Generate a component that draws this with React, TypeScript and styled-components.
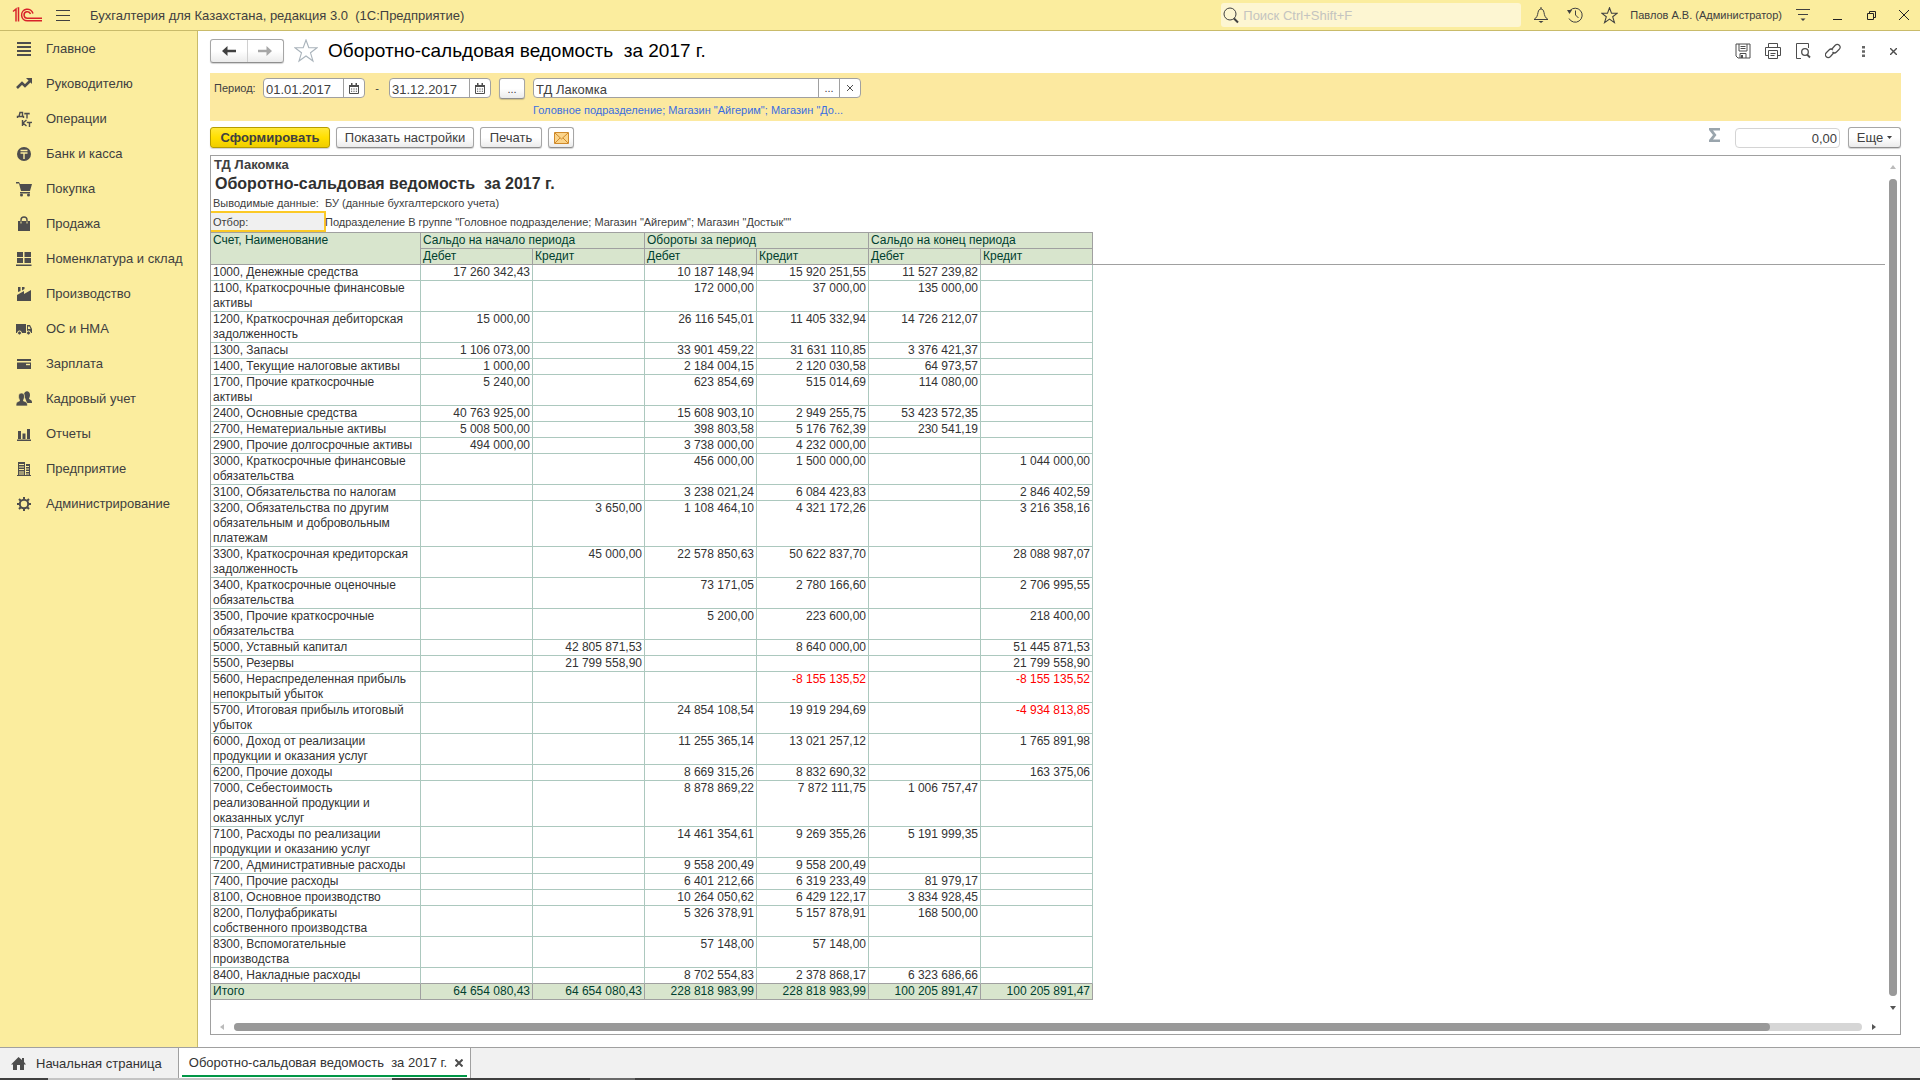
import React from 'react';
import styled, { createGlobalStyle, css } from 'styled-components';

const sans = '"Liberation Sans", Arial, sans-serif';
const ink = '#404040';
const yellow = '#fbed9e';

const GlobalStyle = createGlobalStyle`
  * { box-sizing: border-box; }
  html, body { margin: 0; height: 100%; }
  body { background: #fff; color: ${ink}; font-family: ${sans}; font-size: 13px; }
  #root { height: 100%; }
  button, input { font-family: ${sans}; color: ${ink}; margin: 0; }
`;

const Shell = styled.div`
  display: flex;
  flex-direction: column;
  height: 100vh;
  overflow: hidden;
`;

/* ---------- top bar ---------- */
const TopBar = styled.header`
  display: flex;
  align-items: center;
  flex: none;
  height: 31px;
  padding-left: 12px;
  background: ${yellow};
  border-bottom: 1px solid #c9bb6a;
`;
const AppTitle = styled.div`
  flex: 1;
  font-size: 13px;
  white-space: pre;
`;
const IconButton = styled.button<{ $w?: number; $h?: number }>`
  display: flex;
  align-items: center;
  justify-content: center;
  flex: none;
  width: ${(p) => p.$w ?? 34}px;
  height: ${(p) => p.$h ?? 28}px;
  padding: 0;
  border: 0;
  background: none;
`;
const MenuButton = styled(IconButton)`
  margin: 0 12px 0 6px;
`;
const Search = styled.label`
  display: flex;
  align-items: center;
  gap: 4px;
  width: 300px;
  height: 24px;
  margin-right: 3px;
  padding: 0 2px;
  border-radius: 3px;
  background: #fdf6d2;
`;
const SearchInput = styled.input`
  flex: 1;
  min-width: 0;
  padding: 0;
  border: 0;
  outline: 0;
  background: none;
  font-size: 13px;
  &::placeholder { color: #c4c4c0; opacity: 1; }
`;
const User = styled.a`
  margin: 0 4px 0 4px;
  color: ${ink};
  font-size: 11px;
  text-decoration: none;
`;

/* ---------- body ---------- */
const Body = styled.div`
  display: flex;
  flex: 1;
  min-height: 0;
`;
const Sidebar = styled.nav`
  flex: none;
  width: 198px;
  background: ${yellow};
  border-right: 1px solid #c9bb6a;
`;
const NavItem = styled.a`
  display: flex;
  align-items: center;
  gap: 14px;
  height: 35px;
  padding-left: 16px;
  color: ${ink};
  font-size: 13px;
  text-decoration: none;
  white-space: nowrap;
`;
const Main = styled.main`
  display: flex;
  flex-direction: column;
  flex: 1;
  min-width: 0;
  padding: 8px 19px 12px 12px;
`;

const TitleRow = styled.div`
  display: flex;
  align-items: center;
  flex: none;
  height: 24px;
  margin-right: -7px;
`;
const raised = css`
  border: 1px solid #a6a6a6;
  border-bottom-color: #8e8e8e;
  border-radius: 3px;
  background: linear-gradient(#fff 50%, #ebebeb);
  box-shadow: 0 1px 1px rgba(0, 0, 0, 0.18);
`;
const History = styled.div`
  display: flex;
  width: 74px;
  height: 24px;
  ${raised}
`;
const HistoryButton = styled.button`
  display: flex;
  flex: 1;
  align-items: center;
  justify-content: center;
  padding: 0;
  border: 0;
  background: none;
  & + & { border-left: 1px solid #d0d0d0; }
`;
const PageTitle = styled.h1`
  flex: 1;
  margin: 0;
  color: #000;
  font-size: 19px;
  font-weight: 400;
  white-space: pre;
`;

const Filter = styled.form`
  display: flex;
  align-items: flex-start;
  flex: none;
  height: 48px;
  margin-top: 10px;
  padding: 5px 4px;
  background: #fce9a0;
`;
const FilterLabel = styled.label`
  width: 49px;
  font-size: 11px;
  line-height: 21px;
`;
const Dash = styled.span`
  width: 24px;
  text-align: center;
  font-size: 11px;
  line-height: 21px;
`;
const Field = styled.div<{ $w: number }>`
  display: flex;
  width: ${(p) => p.$w}px;
  height: 20px;
  border: 1px solid #a0a0a0;
  border-radius: 4px;
  background: #fff;
`;
const FieldInput = styled.input`
  flex: 1;
  min-width: 0;
  padding: 2px 2px 0;
  border: 0;
  outline: 0;
  background: none;
  font-size: 13px;
`;
const FieldButton = styled.button`
  display: flex;
  align-items: center;
  justify-content: center;
  width: 21px;
  padding: 0;
  border: 0;
  border-left: 1px solid #a0a0a0;
  background: none;
  font-size: 11px;
`;
const Company = styled.div`
  display: flex;
  flex-direction: column;
  gap: 5px;
  margin-left: 8px;
`;
const FilterLink = styled.a`
  color: #3a6ee0;
  font-size: 11px;
  line-height: 14px;
  text-decoration: none;
`;

const Button = styled.button<{ $w?: number; $primary?: boolean }>`
  display: flex;
  align-items: center;
  justify-content: center;
  gap: 4px;
  width: ${(p) => (p.$w ? `${p.$w}px` : 'auto')};
  height: 21px;
  padding: 0;
  font-size: 13px;
  white-space: nowrap;
  ${raised}
  ${(p) =>
    p.$primary &&
    css`
      border-color: #b59c00;
      background: linear-gradient(#ffe838, #ffdf00 50%, #efcd00);
      font-weight: 700;
    `}
`;
const PeriodButton = styled(Button)`
  margin-left: 8px;
  font-size: 11px;
`;
const Commands = styled.div`
  display: flex;
  align-items: center;
  flex: none;
  gap: 6px;
  height: 21px;
  margin-top: 6px;
`;
const Sum = styled.label`
  display: flex;
  align-items: flex-start;
  gap: 14px;
  margin: 0 2px 0 auto;
`;
const SumInput = styled.input`
  width: 105px;
  height: 20px;
  padding: 2px 2px 0;
  border: 1px solid #d4d4d4;
  border-radius: 4px;
  font-size: 13px;
  text-align: right;
`;

/* ---------- report ---------- */
const Report = styled.section`
  display: grid;
  grid-template: minmax(0, 1fr) 15px / minmax(0, 1fr) 15px;
  flex: 1;
  min-height: 0;
  margin-top: 7px;
  border: 1px solid #a0a0a0;
`;
const Sheet = styled.div`
  overflow: hidden;
`;
const Org = styled.div`
  padding: 0 3px;
  font-size: 13px;
  font-weight: 700;
  line-height: 17px;
`;
const ReportTitle = styled.h2`
  margin: 0;
  padding: 0 4px;
  font-size: 16px;
  line-height: 21px;
  color: #303030;
  white-space: pre;
`;
const Param = styled.div<{ $h: number }>`
  display: flex;
  height: ${(p) => p.$h}px;
  font-size: 11px;
  line-height: ${(p) => p.$h + 2}px;
  white-space: nowrap;
`;
const ParamName = styled.div<{ $selected?: boolean }>`
  width: ${(p) => (p.$selected ? 115 : 114)}px;
  margin-right: ${(p) => (p.$selected ? -1 : 0)}px;
  padding-left: 2px;
  ${(p) =>
    p.$selected &&
    css`
      border: 2px solid #fbc926;
      border-left: 0;
      background: #f0f0f0;
      line-height: 19px;
    `}
`;

const Table = styled.table`
  width: 100%;
  border-collapse: separate;
  border-spacing: 0;
  table-layout: fixed;
  font-size: 12px;
  line-height: 15px;
`;
const Col = styled.col<{ $w?: number }>`
  width: ${(p) => (p.$w ? `${p.$w}px` : 'auto')};
`;
const Th = styled.th<{ $top?: boolean }>`
  padding: 0 2px;
  border: solid #a0a0a0;
  border-width: ${(p) => (p.$top ? '1px 1px 1px 0' : '0 1px 1px 0')};
  background: #d8e5cd;
  color: #003f2f;
  font-weight: 400;
  text-align: left;
  vertical-align: top;
`;
const FreezeLine = styled.td`
  padding: 0;
  border-bottom: 1px solid #a0a0a0;
`;
const Td = styled.td<{ $total?: boolean; $negative?: boolean; $last?: boolean }>`
  height: 16px;
  padding: 0 2px;
  border: solid ${(p) => (p.$total ? '#a0a0a0' : '#acc8be')};
  border-width: 0 1px 1px 0;
  border-bottom-color: ${(p) => (p.$total || p.$last ? '#a0a0a0' : '#acc8be')};
  background: ${(p) => (p.$total ? '#d8e5cd' : 'transparent')};
  color: ${(p) => (p.$negative ? '#f00' : p.$total ? '#003f2f' : '#333')};
  text-align: right;
  vertical-align: top;
  white-space: nowrap;
`;
const NameTd = styled(Td)`
  padding-right: 6px;
  text-align: left;
  white-space: normal;
`;

const ScrollBar = styled.div<{ $vertical?: boolean }>`
  display: flex;
  flex-direction: ${(p) => (p.$vertical ? 'column' : 'row')};
  align-items: center;
  gap: 4px;
  padding: ${(p) => (p.$vertical ? '3px 0' : '0 3px')};
`;
const ScrollArrow = styled.button<{ $vertical?: boolean }>`
  display: flex;
  align-items: center;
  justify-content: center;
  flex: none;
  width: ${(p) => (p.$vertical ? 11 : 16)}px;
  height: ${(p) => (p.$vertical ? 16 : 11)}px;
  padding: 0;
  border: 0;
  background: none;
`;
const Track = styled.div<{ $vertical?: boolean }>`
  flex: 1;
  ${(p) => (p.$vertical ? 'width: 8px;' : 'height: 8px;')}
  border-radius: 4px;
  background: #d6d6d6;
`;
const Thumb = styled.div<{ $vertical?: boolean }>`
  width: ${(p) => (p.$vertical ? '100%' : '94.35%')};
  height: 100%;
  border-radius: 4px;
  background: #999;
`;

/* ---------- open windows ---------- */
const Tabs = styled.footer`
  display: flex;
  flex: none;
  height: 31px;
  border-top: 1px solid #a0a0a0;
  background: #f1f1f1;
`;
const Tab = styled.div<{ $active?: boolean }>`
  display: flex;
  align-items: center;
  gap: 10px;
  padding: 0 16px 0 11px;
  ${(p) =>
    p.$active &&
    css`
      padding: 0;
      border: solid #a0a0a0;
      border-width: 0 1px;
      background: #fff;
    `}
`;
const TabInner = styled.div`
  display: flex;
  align-items: center;
  gap: 8px;
  align-self: stretch;
  margin: 0 3px 1px;
  padding: 2px 4px 0 7px;
  border-bottom: 2px solid #009646;
`;
const TabLink = styled.a`
  color: #333;
  font-size: 13px;
  text-decoration: none;
  white-space: pre;
`;
const Strip = styled.div`
  display: flex;
  flex: none;
  height: 2px;
  background: #404040;
`;
const StripPart = styled.div<{ $w: number; $c: string }>`
  width: ${(p) => p.$w}px;
  background: ${(p) => p.$c};
`;

/* ---------- icons ---------- */
const Svg = ({ w = 16, h = 16, children }: { w?: number; h?: number; children: React.ReactNode }) => (
  <svg width={w} height={h} viewBox={`0 0 ${w} ${h}`} fill="none" stroke="none" aria-hidden="true">
    {children}
  </svg>
);
const g = '#4d4d4d';

const navItems: [string, React.ReactNode][] = [
  ['Главное', <path d="M1 1h14v2H1zM1 5h14v2H1zM1 9h14v2H1zM1 13h14v2H1z" fill={g} />],
  ['Руководителю', <><path d="M1 12l5-5 3 3 5-5" stroke={g} strokeWidth="2.6" /><path d="M10 2h6v6z" fill={g} /></>],
  ['Операции', <>
    <path d="M1.500 7V5.500h6V7M3 5.500l1-4h2.500v4M9 3.500V2.500h4v1M11 2.500V7.500M6.500 9v6M10.500 9L7 12l3.500 3M11.500 12v-.5h4v.5M13.500 11.500V16" stroke={g} strokeWidth="1.400" />
  </>],
  ['Банк и касса', <><circle cx="8" cy="8" r="7" fill={g} /><path d="M4.500 4.500h7M4.500 7h7M8 7v6" stroke={yellow} strokeWidth="1.400" /></>],
  ['Покупка', <><path d="M0 1h3l1 2h12l-2 7H5L3 2.500H0zM4 11h10v1.500H4z" fill={g} /><circle cx="5.500" cy="14" r="1.500" fill={g} /><circle cx="12.500" cy="14" r="1.500" fill={g} /></>],
  ['Продажа', <><path d="M2 5h12v10H2z" fill={g} /><path d="M5 8V4a3 3 0 0 1 6 0v4" stroke={g} strokeWidth="1.400" /><path d="M5 5.500v2M11 5.500v2" stroke={yellow} /></>],
  ['Номенклатура и склад', <path d="M1 1h6v5H1zM8.500 1H15v5H8.500zM1 7h6v5H1zM8.500 7H15v5H8.500zM0 13.500h15.500v1.500H0z" fill={g} />],
  ['Производство', <path d="M2 1h2.500v4L2 6zM6 1h2.500v2L6 4.500zM1 9l7-4v3l7-4v11H1z" fill={g} />],
  ['ОС и НМА', <><path d="M0 3h10v9H0zM11 4h3l2 4v4h-5z" fill={g} /><path d="M12 5.500h1.500L14.500 8H12z" fill={yellow} /><circle cx="3.500" cy="12" r="2" fill={g} stroke={yellow} /><circle cx="12.500" cy="12" r="2" fill={g} stroke={yellow} /></>],
  ['Зарплата', <><path d="M1 3h14v2H1zM1 6.500h14V13H1z" fill={g} /><path d="M10 8.500h4" stroke={yellow} strokeWidth="1.400" /></>],
  ['Кадровый учет', <><path d="M8 4c0-5 6-5 6 0 0 2-1 3-1 4 2 1 3 1 3 4h-5z" fill={g} /><path d="M2.500 5c0-4 6-4 6 0 0 3-1 3-1 5 3 1 4 1 4 5H0c0-4 1-4 3.500-5 0-2-1-2-1-5z" fill={g} stroke={yellow} strokeWidth=".7" /></>],
  ['Отчеты', <path d="M1 13.500h14V15H1zM2 5h3v8H2zM6.500 7.500h3V13h-3zM11 3h3v10h-3z" fill={g} />],
  ['Предприятие', <><path d="M2 1h7v14H2zM10 3h4v12h-4zM1 14h14v1H1z" fill={g} /><path d="M3 3.500h5M3 6h5M3 8.500h5M3 11h5M10 5.500h3M10 8h3M10 10.500h3M10 13h3M3 13h5" stroke={yellow} /></>],
  ['Администрирование', <><circle cx="8" cy="8" r="4.200" stroke={g} strokeWidth="2" /><path d="M8 1v3M8 12v3M1 8h3M12 8h3M3 3l2 2M11 11l2 2M13 3l-2 2M3 13l2-2" stroke={g} strokeWidth="2" /></>],
];

const starPath = 'M12 1l2.800 7.800H23l-6.500 5L19 22l-7-5-7 5 2.500-8.200L1 8.800h8.200z';

const Logo = () => (
  <Svg w={30} h={16}>
    <g stroke="#d8232a" strokeWidth="1.500">
      <path d="M1 4.500L4 2V14.500M6.500 14.500V1H5.500" />
      <path d="M21 6.500A5.800 5.800 0 1 0 15.500 13.800H30" />
      <path d="M18.500 7A3.300 3.300 0 1 0 15.500 11.300H30" />
    </g>
  </Svg>
);
const Calendar = () => (
  <Svg w={10} h={11}>
    <path d="M.5 2.500h9v8h-9z" stroke={g} />
    <path d="M0 2h10v2H0zM2 0h1.500v2H2zM6.500 0H8v2H6.500zM2 5.500h1.200v1H2zM4.400 5.500h1.200v1H4.400zM6.800 5.500H8v1H6.800zM2 7.800h1.200v1H2zM4.400 7.800h1.200v1H4.400zM6.800 7.800H8v1H6.800z" fill={g} />
  </Svg>
);
const Triangle = ({ d, c }: { d: string; c: string }) => (
  <Svg w={6} h={6}><path d={d} fill={c} /></Svg>
);

/* ---------- data ---------- */
const rows: string[][] = [
  ['1000, Денежные средства', '17 260 342,43', '', '10 187 148,94', '15 920 251,55', '11 527 239,82', ''],
  ['1100, Краткосрочные финансовые активы', '', '', '172 000,00', '37 000,00', '135 000,00', ''],
  ['1200, Краткосрочная дебиторская задолженность', '15 000,00', '', '26 116 545,01', '11 405 332,94', '14 726 212,07', ''],
  ['1300, Запасы', '1 106 073,00', '', '33 901 459,22', '31 631 110,85', '3 376 421,37', ''],
  ['1400, Текущие налоговые активы', '1 000,00', '', '2 184 004,15', '2 120 030,58', '64 973,57', ''],
  ['1700, Прочие краткосрочные активы', '5 240,00', '', '623 854,69', '515 014,69', '114 080,00', ''],
  ['2400, Основные средства', '40 763 925,00', '', '15 608 903,10', '2 949 255,75', '53 423 572,35', ''],
  ['2700, Нематериальные активы', '5 008 500,00', '', '398 803,58', '5 176 762,39', '230 541,19', ''],
  ['2900, Прочие долгосрочные активы', '494 000,00', '', '3 738 000,00', '4 232 000,00', '', ''],
  ['3000, Краткосрочные финансовые обязательства', '', '', '456 000,00', '1 500 000,00', '', '1 044 000,00'],
  ['3100, Обязательства по налогам', '', '', '3 238 021,24', '6 084 423,83', '', '2 846 402,59'],
  ['3200, Обязательства по другим обязательным и добровольным платежам', '', '3 650,00', '1 108 464,10', '4 321 172,26', '', '3 216 358,16'],
  ['3300, Краткосрочная кредиторская задолженность', '', '45 000,00', '22 578 850,63', '50 622 837,70', '', '28 088 987,07'],
  ['3400, Краткосрочные оценочные обязательства', '', '', '73 171,05', '2 780 166,60', '', '2 706 995,55'],
  ['3500, Прочие краткосрочные обязательства', '', '', '5 200,00', '223 600,00', '', '218 400,00'],
  ['5000, Уставный капитал', '', '42 805 871,53', '', '8 640 000,00', '', '51 445 871,53'],
  ['5500, Резервы', '', '21 799 558,90', '', '', '', '21 799 558,90'],
  ['5600, Нераспределенная прибыль непокрытый убыток', '', '', '', '-8 155 135,52', '', '-8 155 135,52'],
  ['5700, Итоговая прибыль итоговый убыток', '', '', '24 854 108,54', '19 919 294,69', '', '-4 934 813,85'],
  ['6000, Доход от реализации продукции и оказания услуг', '', '', '11 255 365,14', '13 021 257,12', '', '1 765 891,98'],
  ['6200, Прочие доходы', '', '', '8 669 315,26', '8 832 690,32', '', '163 375,06'],
  ['7000, Себестоимость реализованной продукции и оказанных услуг', '', '', '8 878 869,22', '7 872 111,75', '1 006 757,47', ''],
  ['7100, Расходы по реализации продукции и оказанию услуг', '', '', '14 461 354,61', '9 269 355,26', '5 191 999,35', ''],
  ['7200, Административные расходы', '', '', '9 558 200,49', '9 558 200,49', '', ''],
  ['7400, Прочие расходы', '', '', '6 401 212,66', '6 319 233,49', '81 979,17', ''],
  ['8100, Основное производство', '', '', '10 264 050,62', '6 429 122,17', '3 834 928,45', ''],
  ['8200, Полуфабрикаты собственного производства', '', '', '5 326 378,91', '5 157 878,91', '168 500,00', ''],
  ['8300, Вспомогательные производства', '', '', '57 148,00', '57 148,00', '', ''],
  ['8400, Накладные расходы', '', '', '8 702 554,83', '2 378 868,17', '6 323 686,66', ''],
  ['Итого', '64 654 080,43', '64 654 080,43', '228 818 983,99', '228 818 983,99', '100 205 891,47', '100 205 891,47'],
];
const groups = ['Сальдо на начало периода', 'Обороты за период', 'Сальдо на конец периода'];

const ReportTable = () => (
  <Table>
    <colgroup>
      <Col $w={210} />
      {[0, 1, 2, 3, 4, 5].map((i) => <Col key={i} $w={112} />)}
      <Col />
    </colgroup>
    <thead>
      <tr>
        <Th $top rowSpan={2}>Счет, Наименование</Th>
        {groups.map((t) => <Th $top colSpan={2} key={t}>{t}</Th>)}
        <FreezeLine rowSpan={2} />
      </tr>
      <tr>
        {groups.map((t) => (
          <React.Fragment key={t}>
            <Th>Дебет</Th>
            <Th>Кредит</Th>
          </React.Fragment>
        ))}
      </tr>
    </thead>
    <tbody>
      {rows.map(([name, ...values], r) => {
        const total = r === rows.length - 1;
        const last = r === rows.length - 2;
        return (
          <tr key={name}>
            <NameTd $total={total} $last={last}>{name}</NameTd>
            {values.map((v, i) => (
              <Td key={i} $total={total} $last={last} $negative={v.startsWith('-')}>{v}</Td>
            ))}
          </tr>
        );
      })}
    </tbody>
  </Table>
);

export default function App() {
  return (
    <Shell>
      <GlobalStyle />
      <TopBar>
        <Logo />
        <MenuButton $w={30} aria-label="Меню">
          <Svg w={14} h={11}><path d="M0 .5h14M0 5.500h14M0 10.500h14" stroke={ink} /></Svg>
        </MenuButton>
        <AppTitle>Бухгалтерия для Казахстана, редакция 3.0  (1С:Предприятие)</AppTitle>
        <Search>
          <Svg w={16} h={18}>
            <circle cx="7" cy="8" r="6" stroke={ink} /><path d="M11 12.500l4 4" stroke={ink} strokeWidth="2" />
          </Svg>
          <SearchInput aria-label="Поиск" placeholder="Поиск Ctrl+Shift+F" />
        </Search>
        <IconButton aria-label="Уведомления">
          <Svg w={16} h={18}>
            <path d="M1 13.500h14c-3-2-3.500-4-4-7C10.500 4 9.500 3 8 3S5.500 4 5 6.500c-.5 3-1 5-4 7z" stroke={ink} /><path d="M7.500 1h1v2h-1zM5.500 15h5l-2.500 2z" fill={ink} />
          </Svg>
        </IconButton>
        <IconButton aria-label="История">
          <Svg w={18} h={18}>
            <path d="M4 4.500A7 7 0 1 1 3 12.500M9.500 4.500V9l3 3" stroke={ink} /><path d="M1 4h5L3.500 8z" fill={ink} />
          </Svg>
        </IconButton>
        <IconButton aria-label="Избранное">
          <svg width="17" height="17" viewBox="0 0 24 24" fill="none" aria-hidden="true"><path d={starPath} stroke={ink} strokeWidth="1.500" /></svg>
        </IconButton>
        <User href="#user">Павлов А.В. (Администратор)</User>
        <IconButton aria-label="Настройки окна">
          <Svg w={14} h={14}><path d="M0 1.500h14M2 6.500h10" stroke={ink} /><path d="M4.500 10.500h5L7 13z" fill={ink} /></Svg>
        </IconButton>
        <IconButton aria-label="Свернуть"><Svg w={9} h={10}><path d="M0 9.500h9" stroke="#222" /></Svg></IconButton>
        <IconButton aria-label="Развернуть">
          <Svg w={9} h={9}><path d="M.5 2.500h6v6h-6zM2.500 2V.5h6v6H7" stroke="#222" /></Svg>
        </IconButton>
        <IconButton $w={32} aria-label="Закрыть"><Svg w={10} h={10}><path d="M0 0l10 10M10 0L0 10" stroke="#222" /></Svg></IconButton>
      </TopBar>

      <Body>
        <Sidebar>
          {navItems.map(([label, icon]) => (
            <NavItem href="#section" key={label}><Svg>{icon}</Svg>{label}</NavItem>
          ))}
        </Sidebar>
        <Main>
          <TitleRow>
            <History>
              <HistoryButton aria-label="Назад">
                <Svg w={14} h={10}><path d="M0 5l5.500-5v3.800H14v2.400H5.500V10z" fill="#404040" /></Svg>
              </HistoryButton>
              <HistoryButton aria-label="Вперед">
                <Svg w={14} h={10}><path d="M14 5L8.500 0v3.800H0v2.400h8.500V10z" fill="#a6a6a6" /></Svg>
              </HistoryButton>
            </History>
            <IconButton $w={44} aria-label="В избранное">
              <Svg w={24} h={24}><path d={starPath} stroke="#a9b3bb" strokeWidth="1.100" /></Svg>
            </IconButton>
            <PageTitle>Оборотно-сальдовая ведомость  за 2017 г.</PageTitle>
            <IconButton $w={30} aria-label="Сохранить">
              <Svg><path d="M1 1h14v14H3l-2-2zM4 1v7h8V1M5 15v-4.500h6V15M5.500 3.500h5M5.500 5.500h5" stroke={g} /><path d="M6 12h2v3H6z" fill={g} /></Svg>
            </IconButton>
            <IconButton $w={30} aria-label="Печать">
              <Svg><path d="M3.500 4.500v-4h9v4M3.500 12.500h-3v-8h15v8h-3M3.500 7.500h9v8h-9zM5.500 10.500h5M5.500 12.500h4" stroke={g} /></Svg>
            </IconButton>
            <IconButton $w={30} aria-label="Просмотр">
              <Svg><path d="M6 15.500H1.500V.5h12V5" stroke={g} /><circle cx="10" cy="9" r="3.300" stroke={g} strokeWidth="1.300" /><path d="M12 11.500l3 3" stroke={g} strokeWidth="1.800" /></Svg>
            </IconButton>
            <IconButton $w={30} aria-label="Ссылка">
              <Svg><path d="M6.500 6.500l3.500-4c3-3 7 1 4 4L11.500 9c-1.500 1.500-3 1-4 0M9 9.500L5.500 13.500c-3 3-7-1-4-4L4 7c1.500-1.500 3-1 4 0" stroke={g} strokeWidth="1.200" /></Svg>
            </IconButton>
            <IconButton $w={30} aria-label="Ещё">
              <Svg w={3} h={11}><path d="M0 0h3v2.500H0zM0 4.200h3v2.500H0zM0 8.400h3v2.500H0z" fill="#666" /></Svg>
            </IconButton>
            <IconButton $w={30} aria-label="Закрыть страницу">
              <Svg w={7} h={7}><path d="M0 0l7 7M7 0L0 7" stroke={g} strokeWidth="1.400" /></Svg>
            </IconButton>
          </TitleRow>

          <Filter>
            <FilterLabel htmlFor="from">Период:</FilterLabel>
            <Field $w={102}>
              <FieldInput id="from" defaultValue="01.01.2017" />
              <FieldButton type="button" aria-label="Выбрать дату начала"><Calendar /></FieldButton>
            </Field>
            <Dash>-</Dash>
            <Field $w={102}>
              <FieldInput aria-label="Конец периода" defaultValue="31.12.2017" />
              <FieldButton type="button" aria-label="Выбрать дату конца"><Calendar /></FieldButton>
            </Field>
            <PeriodButton type="button" $w={26}>...</PeriodButton>
            <Company>
              <Field $w={328}>
                <FieldInput aria-label="Организация" defaultValue="ТД Лакомка" />
                <FieldButton type="button">...</FieldButton>
                <FieldButton type="button" aria-label="Очистить">
                  <Svg w={6} h={6}><path d="M0 0l6 6M6 0L0 6" stroke={g} /></Svg>
                </FieldButton>
              </Field>
              <FilterLink href="#departments">Головное подразделение; Магазин "Айгерим"; Магазин "До...</FilterLink>
            </Company>
          </Filter>

          <Commands>
            <Button $primary $w={120}>Сформировать</Button>
            <Button $w={138}>Показать настройки</Button>
            <Button $w={62}>Печать</Button>
            <Button $w={26} aria-label="Отправить по почте">
              <Svg w={15} h={12}>
                <path d="M.5.5h14v11H.5z" fill="#fbd48a" stroke="#cf8a2b" /><path d="M1 1l6.500 6L14 1M1 11l5-5M14 11L9 6" stroke="#cf8a2b" />
              </Svg>
            </Button>
            <Sum>
              <Svg w={12} h={14}><path d="M0 0h11v2.500H4L7.500 7 4 11.500h7V14H0v-2l4-5-4-5z" fill="#9aa5ad" /></Svg>
              <SumInput aria-label="Сумма" defaultValue="0,00" />
            </Sum>
            <Button $w={53}>
              Еще
              <Svg w={5} h={3}><path d="M0 0h5L2.500 3z" fill={ink} /></Svg>
            </Button>
          </Commands>

          <Report>
            <Sheet>
              <Org>ТД Лакомка</Org>
              <ReportTitle>Оборотно-сальдовая ведомость  за 2017 г.</ReportTitle>
              <Param $h={17}>
                <ParamName>Выводимые данные:</ParamName>БУ (данные бухгалтерского учета)
              </Param>
              <Param $h={21}>
                <ParamName $selected>Отбор:</ParamName>
                Подразделение В группе "Головное подразделение; Магазин "Айгерим"; Магазин "Достык""
              </Param>
              <ReportTable />
            </Sheet>
            <ScrollBar $vertical>
              <ScrollArrow $vertical aria-label="Вверх"><Triangle d="M0 5l3-4 3 4z" c="#bbb" /></ScrollArrow>
              <Track $vertical><Thumb $vertical /></Track>
              <ScrollArrow $vertical aria-label="Вниз"><Triangle d="M0 1h6L3 5z" c="#555" /></ScrollArrow>
            </ScrollBar>
            <ScrollBar>
              <ScrollArrow aria-label="Влево"><Triangle d="M5 0v6L1 3z" c="#bbb" /></ScrollArrow>
              <Track><Thumb /></Track>
              <ScrollArrow aria-label="Вправо"><Triangle d="M1 0v6l4-3z" c="#555" /></ScrollArrow>
            </ScrollBar>
          </Report>
        </Main>
      </Body>

      <Tabs>
        <Tab>
          <Svg w={15} h={13}><path d="M7.500 0L11 3V1h2v4l2 2.500h-2V13H9V8H6v5H2V7.500H0z" fill={g} /></Svg>
          <TabLink href="#home">Начальная страница</TabLink>
        </Tab>
        <Tab $active>
          <TabInner>
            <TabLink href="#report">Оборотно-сальдовая ведомость  за 2017 г.</TabLink>
            <IconButton $w={8} $h={16} aria-label="Закрыть вкладку">
              <Svg w={8} h={8}><path d="M.5.5l7 7M7.500.5l-7 7" stroke={g} strokeWidth="2" /></Svg>
            </IconButton>
          </TabInner>
        </Tab>
      </Tabs>
      <Strip>
        <StripPart $w={48} $c="#404040" />
        <StripPart $w={344} $c="#c4c4c4" />
        <StripPart $w={198} $c="#404040" />
        <StripPart $w={45} $c="#6a6a6a" />
      </Strip>
    </Shell>
  );
}
